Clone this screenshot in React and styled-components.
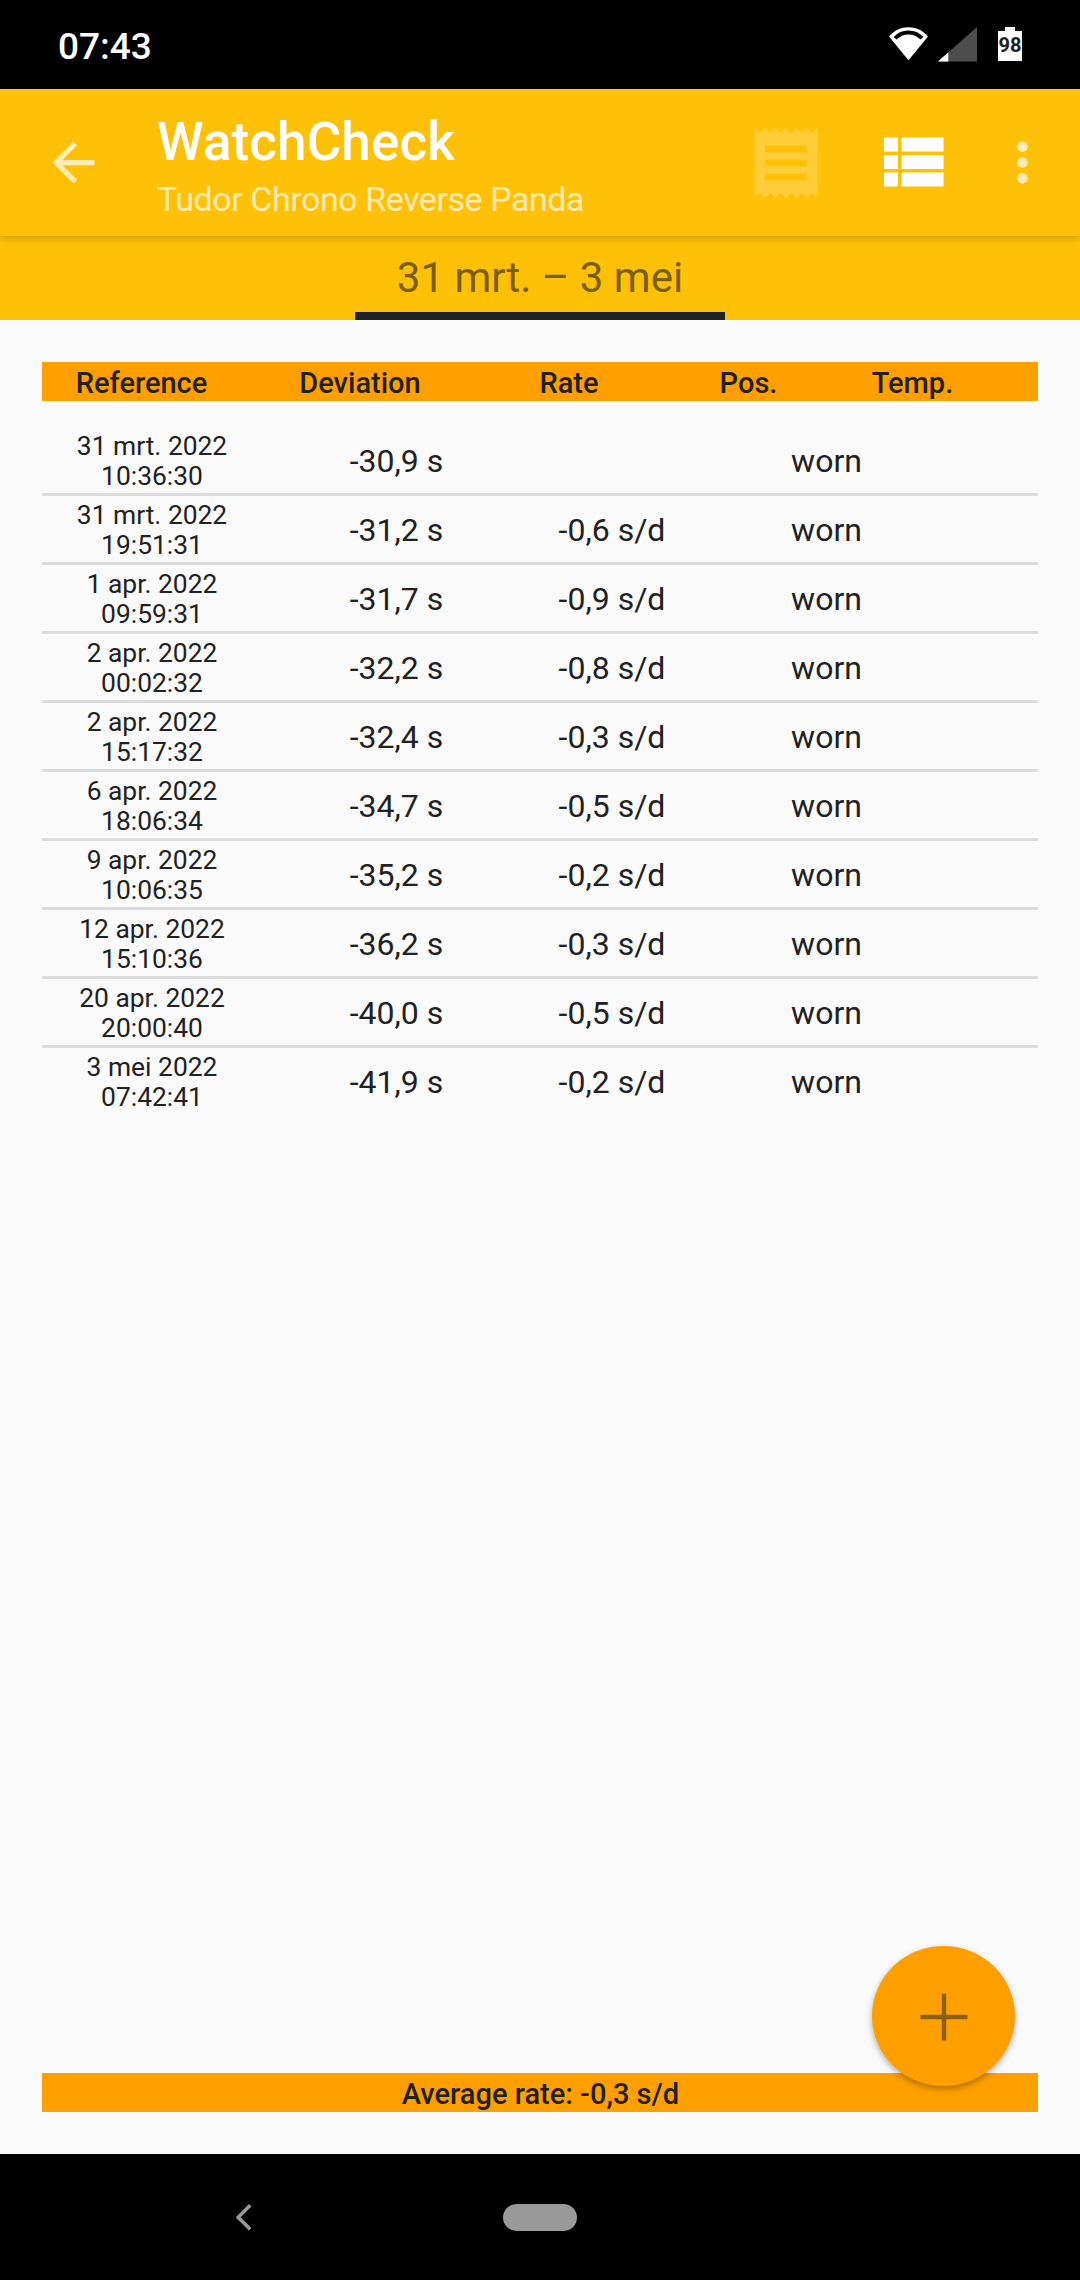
import styled, { createGlobalStyle } from "styled-components";
import { MdArrowBack, MdMoreVert, MdReceipt } from "react-icons/md";

const readings = [
  { date: "31 mrt. 2022", time: "10:36:30", deviation: "-30,9 s", rate: "" },
  { date: "31 mrt. 2022", time: "19:51:31", deviation: "-31,2 s", rate: "-0,6 s/d" },
  { date: "1 apr. 2022", time: "09:59:31", deviation: "-31,7 s", rate: "-0,9 s/d" },
  { date: "2 apr. 2022", time: "00:02:32", deviation: "-32,2 s", rate: "-0,8 s/d" },
  { date: "2 apr. 2022", time: "15:17:32", deviation: "-32,4 s", rate: "-0,3 s/d" },
  { date: "6 apr. 2022", time: "18:06:34", deviation: "-34,7 s", rate: "-0,5 s/d" },
  { date: "9 apr. 2022", time: "10:06:35", deviation: "-35,2 s", rate: "-0,2 s/d" },
  { date: "12 apr. 2022", time: "15:10:36", deviation: "-36,2 s", rate: "-0,3 s/d" },
  { date: "20 apr. 2022", time: "20:00:40", deviation: "-40,0 s", rate: "-0,5 s/d" },
  { date: "3 mei 2022", time: "07:42:41", deviation: "-41,9 s", rate: "-0,2 s/d" },
];

function WifiIcon() {
  return (
    <svg width="39" height="34" viewBox="0 0 39.6 34">
      <path d="M0 9.4C5.4 3 12.2 0 19.8 0s14.4 3 19.8 9.4L19.8 33.6z" fill="#fff" />
      <path
        d="M6.2 11.2C9.8 7.3 14.4 5.3 19.8 5.3s10 2 13.6 5.9"
        fill="none"
        stroke="#000"
        strokeWidth="4"
      />
    </svg>
  );
}

function SignalIcon() {
  return (
    <svg width="39" height="35" viewBox="0 0 39 35">
      <path d="M0 34.5L39 0v34.5z" fill="#4d4d4d" />
      <path d="M0 34.5L10.3 25.3v9.2z" fill="#fff" />
    </svg>
  );
}

function ListIcon() {
  return (
    <svg viewBox="0 0 24 24" fill="currentColor">
      <path d="M4 14h4v-4H4v4zm0 5h4v-4H4v4zM4 9h4V5H4v4zm5 5h12v-4H9v4zm0 5h12v-4H9v4zM9 5v4h12V5H9z" />
    </svg>
  );
}

function App() {
  return (
    <Screen>
      <GlobalStyle />
      <StatusBar>
        <Clock>07:43</Clock>
        <StatusIcons>
          <WifiIcon />
          <SignalIcon />
          <Battery>98</Battery>
        </StatusIcons>
      </StatusBar>

      <AppBar>
        <IconButton $size={63} $opacity={0.7}>
          <MdArrowBack />
        </IconButton>
        <Titles>
          <Title>WatchCheck</Title>
          <Subtitle>Tudor Chrono Reverse Panda</Subtitle>
        </Titles>
        <Actions>
          <IconButton $size={84} $opacity={0.2}>
            <MdReceipt />
          </IconButton>
          <IconButton $size={84} $opacity={1}>
            <ListIcon />
          </IconButton>
          <IconButton $size={63} $opacity={0.7}>
            <MdMoreVert />
          </IconButton>
        </Actions>
      </AppBar>

      <TabBar>
        <Tab>31 mrt. – 3 mei</Tab>
      </TabBar>

      <Content>
        <TableHeader>
          <span>Reference</span>
          <span>Deviation</span>
          <span>Rate</span>
          <span>Pos.</span>
          <span>Temp.</span>
        </TableHeader>
        <Rows>
          {readings.map((reading) => (
            <Row key={reading.date + reading.time}>
              <Reference>
                {reading.date}
                <br />
                {reading.time}
              </Reference>
              <Value>{reading.deviation}</Value>
              <Value>{reading.rate}</Value>
              <Value>worn</Value>
            </Row>
          ))}
        </Rows>
        <AverageRate>Average rate: -0,3 s/d</AverageRate>
        <AddButton aria-label="Add reading">
          <svg width="48" height="48" viewBox="0 0 48 48">
            <path d="M24 .5v47M.5 24h47" stroke="#8a6014" strokeWidth="4.4" />
          </svg>
        </AddButton>
      </Content>

      <NavBar>
        <BackIcon width="16" height="27" viewBox="0 0 16 27">
          <path d="M14.2 1.3L2.2 13.3l12 12" fill="none" stroke="#999" strokeWidth="3.6" />
        </BackIcon>
        <HomePill />
      </NavBar>
    </Screen>
  );
}

export default App;

const GlobalStyle = createGlobalStyle`
  * {
    box-sizing: border-box;
  }

  body {
    margin: 0;
    background: #fafafa;
    font-family: Roboto, sans-serif;
  }
`;

const Screen = styled.div`
  width: 1080px;
  height: 2280px;
  display: flex;
  flex-direction: column;
  overflow: hidden;
  color: #212121;
`;

const StatusBar = styled.div`
  height: 89px;
  padding: 0 58px;
  display: flex;
  justify-content: space-between;
  background: #000;
  color: #fff;
`;

const Clock = styled.span`
  padding-top: 25px;
  font-size: 37px;
  font-weight: 500;
  line-height: 43px;
`;

const StatusIcons = styled.div`
  display: flex;
  align-items: flex-start;
  gap: 10px;
  padding-top: 27px;

  svg:nth-child(2) {
    margin-right: 11px;
  }
`;

const Battery = styled.div`
  width: 24px;
  height: 34px;
  padding-top: 6px;
  text-align: center;
  font-size: 20px;
  font-weight: 700;
  line-height: 24px;
  color: #202124;
  background: #fff;
  clip-path: polygon(0 4px, 7px 4px, 7px 0, 17px 0, 17px 4px, 100% 4px, 100% 100%, 0 100%);
`;

const AppBar = styled.header`
  position: relative;
  z-index: 1;
  height: 147px;
  padding: 0 26px 0 42px;
  display: flex;
  align-items: center;
  background: #ffc107;
  box-shadow: 0 2px 7px rgba(0, 0, 0, 0.22);
`;

const IconButton = styled.button`
  width: ${(props) => props.$size}px;
  height: ${(props) => props.$size}px;
  padding: 0;
  border: none;
  background: none;
  color: #fff;
  opacity: ${(props) => props.$opacity};

  svg {
    display: block;
    width: 100%;
    height: 100%;
  }
`;

const Titles = styled.div`
  margin-left: 52px;
  padding-top: 7px;
  flex: 1;
`;

const Title = styled.h1`
  margin: 0;
  font-size: 53px;
  font-weight: 500;
  line-height: 62px;
  letter-spacing: 0.1px;
  color: #fff;
`;

const Subtitle = styled.p`
  margin: 4px 0 0;
  font-size: 34px;
  line-height: 44px;
  letter-spacing: -0.45px;
  color: rgba(255, 255, 255, 0.7);
`;

const Actions = styled.div`
  display: flex;
  align-items: center;

  button + button {
    margin: 0 0 1px 42px;
  }

  button:last-child {
    margin: 0 0 0 37px;
  }
`;

const TabBar = styled.nav`
  height: 84px;
  display: flex;
  justify-content: center;
  background: #ffc107;
`;

const Tab = styled.div`
  width: 370px;
  padding-top: 17px;
  border-bottom: 8px solid #212121;
  text-align: center;
  font-size: 42px;
  line-height: 50px;
  color: #7a5f06;
`;

const Content = styled.main`
  position: relative;
  flex: 1;
  display: flex;
  flex-direction: column;
  padding: 42px;
  background: #fafafa;
`;

const TableHeader = styled.div`
  height: 39px;
  padding-top: 2px;
  display: grid;
  grid-template-columns: 199px 238px 180px 179px 149px;
  text-align: center;
  background: #ffa000;
  font-size: 29px;
  font-weight: 500;
  line-height: 38px;
`;

const Rows = styled.div`
  flex: 1;
  margin-top: 26px;
`;

const Row = styled.div`
  height: 69px;
  display: grid;
  grid-template-columns: 220px 269px 162px 267px;
  text-align: center;
  border-bottom: 3px solid #dcdcdc;

  &:last-child {
    border-bottom: none;
  }
`;

const Reference = styled.div`
  padding-top: 4px;
  font-size: 26.4px;
  line-height: 30px;
`;

const Value = styled.div`
  padding-top: 15px;
  font-size: 32px;
  line-height: 38px;
`;

const AverageRate = styled.div`
  height: 39px;
  padding: 2px 0 0 1px;
  text-align: center;
  background: #ffa000;
  font-size: 29px;
  font-weight: 500;
  line-height: 38px;
`;

const AddButton = styled.button`
  position: absolute;
  right: 65px;
  bottom: 68px;
  width: 143px;
  height: 140px;
  padding: 2px 0 0;
  display: flex;
  align-items: center;
  justify-content: center;
  border: none;
  border-radius: 50%;
  background: #ffa000;
  box-shadow: 0 3px 6px rgba(0, 0, 0, 0.3);
`;

const NavBar = styled.footer`
  height: 126px;
  padding-left: 236px;
  display: flex;
  align-items: center;
  background: #000;
`;

const BackIcon = styled.svg`
  margin-right: 251px;
`;

const HomePill = styled.div`
  width: 74px;
  height: 27px;
  border-radius: 14px;
  background: #999;
`;
